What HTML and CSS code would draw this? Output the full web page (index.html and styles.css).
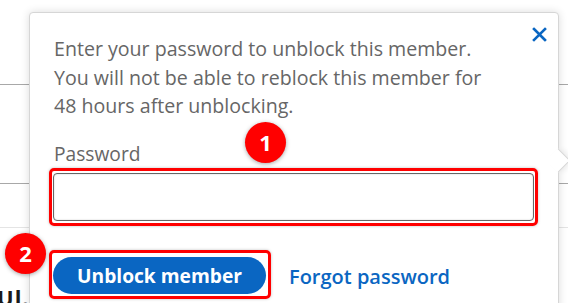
FILE: index.html
```html
<!DOCTYPE html>
<html>
<head>
<meta charset="utf-8">
<link rel="stylesheet" href="styles.css">
</head>
<body>
<div class="page">
  <div class="row row-a"></div>
  <div class="row row-b"></div>
  <div class="row row-c"></div>
  <div class="under">Ul.</div>
</div>

<div class="popover">
  <span class="arrow"></span>
  <button class="close" aria-label="Close">
    <svg width="15" height="15" viewBox="0 0 15 15"><path d="M2 2 L13 13 M13 2 L2 13" stroke="#0a66c2" stroke-width="2.6" stroke-linecap="square" fill="none"/></svg>
  </button>
  <p class="msg">Enter your password to unblock this member. You will not be able to reblock this member for 48 hours after unblocking.</p>
  <label class="label" for="pw">Password</label>
  <div class="hl hl-input">
    <input id="pw" class="input" type="password">
  </div>
  <div class="actions">
    <div class="hl hl-btn">
      <button class="primary">Unblock member</button>
    </div>
    <a class="link" href="#">Forgot password</a>
  </div>
</div>

<span class="badge badge-1">1</span>
<span class="badge badge-2">2</span>
</body>
</html>
```
FILE: styles.css
```css
* { box-sizing: border-box; }
html, body { margin: 0; padding: 0; }
body {
  width: 568px;
  height: 303px;
  overflow: hidden;
  background: #fff;
  font-family: "Open Sans", "Noto Sans", sans-serif;
  position: relative;
}
.page { display: flex; flex-direction: column; }
.row { border-bottom: 1px solid #a8a8a8; }
.row-a { height: 85px; }
.row-b { height: 99px; }
.row-c { height: 44px; border-bottom-color: #e4e4e4; }
.under {
  margin: 58px 0 0 -3px;
  font-size: 22px;
  font-weight: 700;
  color: #1a1a1a;
  line-height: 22px;
  letter-spacing: 1px;
}

.popover {
  position: absolute;
  left: 29px;
  top: 12px;
  width: 530px;
  height: 320px;
  background: #fff;
  border: 1px solid #d6d6d6;
  border-radius: 4px;
  box-shadow: 0 0 8px rgba(0,0,0,0.14);
  padding: 22px 24px 0 24px;
}
.arrow {
  position: absolute;
  right: -9px;
  top: 139px;
  width: 17px;
  height: 17px;
  background: #fff;
  border-top: 1px solid #d6d6d6;
  border-right: 1px solid #d6d6d6;
  transform: rotate(45deg);
  box-shadow: 3px -3px 5px rgba(0,0,0,0.06);
}
.close {
  position: absolute;
  right: 11px;
  top: 14px;
  width: 15px;
  height: 15px;
  padding: 0;
  border: 0;
  background: none;
}
.close svg { display: block; }
.msg {
  margin: 0;
  font-size: 19.6px;
  line-height: 28.5px;
  color: #666;
  width: 450px;
}
.label {
  display: block;
  margin-top: 19px;
  font-size: 19.2px;
  line-height: 28px;
  color: #666;
}
.hl {
  border: 3px solid #f00;
  border-radius: 5px;
  box-shadow: 0 0 3px rgba(0,0,0,0.25);
}
.hl-input {
  margin-left: -5px;
  width: 489px;
  padding: 2px 1px 2px 1px;
}
.input {
  display: block;
  width: 100%;
  height: 48px;
  border: 1px solid #666;
  border-radius: 4px;
  background: #fff;
  box-shadow: inset 0 0 2px rgba(0,0,0,0.2);
}
.actions {
  display: flex;
  align-items: center;
  gap: 18px;
  margin-top: 24px;
}
.hl-btn {
  margin-left: -5px;
  padding: 4px 2px 2px 1px;
}
.primary {
  display: block;
  width: 213px;
  height: 37px;
  border: 0;
  border-radius: 19px;
  background: #0a66c2;
  color: #fff;
  font-family: "Open Sans", "Noto Sans", sans-serif;
  font-size: 19.2px;
  font-weight: 700;
  padding: 0;
}
.link {
  color: #0a66c2;
  text-decoration: none;
  font-size: 20px;
  font-weight: 600;
  margin-top: 5px;
}

.badge {
  position: absolute;
  width: 41px;
  height: 41px;
  border-radius: 50%;
  background: #f00;
  color: #fff;
  font-family: "Open Sans", sans-serif;
  font-weight: 700;
  font-size: 22px;
  line-height: 41px;
  text-align: center;
  box-shadow: 0 1px 4px rgba(0,0,0,0.35);
}
.badge-1 { left: 245px; top: 122px; }
.badge-2 { left: 5px; top: 233px; }
```
